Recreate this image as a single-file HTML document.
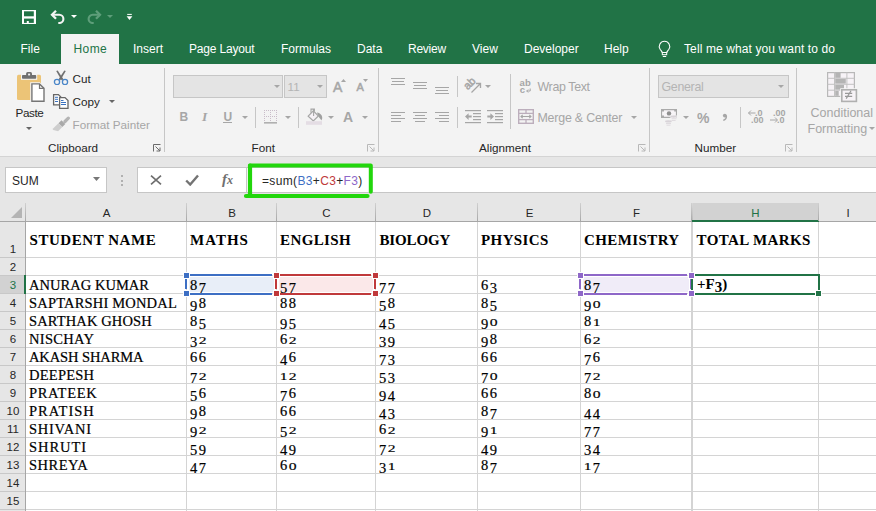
<!DOCTYPE html>
<html><head><meta charset="utf-8"><style>
html,body{margin:0;padding:0;width:876px;height:511px;overflow:hidden;background:#fff}
body{position:relative;font-family:"Liberation Sans",sans-serif}
.b{position:absolute;display:block}
.t{position:absolute;white-space:pre}
</style></head><body>
<div class="b" style="left:0px;top:0px;width:876px;height:64px;background:#217346"></div>
<div class="b" style="left:61px;top:34px;width:58px;height:30px;background:#f3f3f3"></div>
<svg class="b" style="left:22px;top:10px" width="14" height="14" viewBox="0 0 14 14"><rect x="0" y="0" width="14" height="14" fill="#fff"/><rect x="2" y="1.3" width="9.8" height="5" fill="#217346"/><rect x="2" y="8.6" width="9.8" height="4.3" fill="#217346"/><rect x="4.8" y="11" width="2" height="2" fill="#fff"/></svg>
<svg class="b" style="left:50px;top:9px" width="16" height="15" viewBox="0 0 16 15"><path d="M3 5.8h6.3a4.1 4.1 0 0 1 0 8.2h-1" fill="none" stroke="#f4f4f4" stroke-width="2.1"/><path d="M6 1.8l-4 4 4 4" fill="none" stroke="#f4f4f4" stroke-width="2.3"/></svg>
<svg class="b" style="left:71px;top:15px" width="6" height="3" viewBox="0 0 6 3"><path d="M0 0h6l-3 3z" fill="#fff"/></svg>
<svg class="b" style="left:86px;top:9px" width="16" height="15" viewBox="0 0 16 15"><path d="M13 5.8h-6.3a4.1 4.1 0 0 0 0 8.2h1" fill="none" stroke="#5e9e7a" stroke-width="2.1"/><path d="M10 1.8l4 4-4 4" fill="none" stroke="#5e9e7a" stroke-width="2.3"/></svg>
<svg class="b" style="left:107px;top:15px" width="6" height="3" viewBox="0 0 6 3"><path d="M0 0h6l-3 3z" fill="#5e9e7a"/></svg>
<svg class="b" style="left:126px;top:13px" width="7" height="8" viewBox="0 0 7 8"><rect x="1.2" y="0.9" width="4.6" height="1" fill="#fff"/><path d="M0.6 3.3h5.8l-2.9 3.6z" fill="#fff"/></svg>
<div class="t" style="left:20.5px;top:42.84px;font-size:12px;line-height:12px;color:#ffffff;font-family:'Liberation Sans', sans-serif;font-weight:400;letter-spacing:0px">File</div>
<div class="t" style="left:133px;top:42.84px;font-size:12px;line-height:12px;color:#ffffff;font-family:'Liberation Sans', sans-serif;font-weight:400;letter-spacing:0px">Insert</div>
<div class="t" style="left:189px;top:42.84px;font-size:12px;line-height:12px;color:#ffffff;font-family:'Liberation Sans', sans-serif;font-weight:400;letter-spacing:-0.18px">Page Layout</div>
<div class="t" style="left:281px;top:42.84px;font-size:12px;line-height:12px;color:#ffffff;font-family:'Liberation Sans', sans-serif;font-weight:400;letter-spacing:0px">Formulas</div>
<div class="t" style="left:357px;top:42.84px;font-size:12px;line-height:12px;color:#ffffff;font-family:'Liberation Sans', sans-serif;font-weight:400;letter-spacing:0px">Data</div>
<div class="t" style="left:408px;top:42.84px;font-size:12px;line-height:12px;color:#ffffff;font-family:'Liberation Sans', sans-serif;font-weight:400;letter-spacing:-0.25px">Review</div>
<div class="t" style="left:472px;top:42.84px;font-size:12px;line-height:12px;color:#ffffff;font-family:'Liberation Sans', sans-serif;font-weight:400;letter-spacing:0px">View</div>
<div class="t" style="left:524px;top:42.84px;font-size:12px;line-height:12px;color:#ffffff;font-family:'Liberation Sans', sans-serif;font-weight:400;letter-spacing:0px">Developer</div>
<div class="t" style="left:604px;top:42.84px;font-size:12px;line-height:12px;color:#ffffff;font-family:'Liberation Sans', sans-serif;font-weight:400;letter-spacing:0px">Help</div>
<div class="t" style="left:684px;top:42.84px;font-size:12px;line-height:12px;color:#ffffff;font-family:'Liberation Sans', sans-serif;font-weight:400;letter-spacing:0.11px">Tell me what you want to do</div>
<div class="t" style="left:73.5px;top:42.84px;font-size:12px;line-height:12px;color:#217346;font-family:'Liberation Sans', sans-serif;font-weight:400;letter-spacing:0.4px">Home</div>
<svg class="b" style="left:657px;top:40px" width="15" height="18" viewBox="0 0 15 18"><path d="M7.5 1.2a5.2 5.2 0 0 0-4.4 8c0.9 1.3 1.8 2.2 2.2 3.3h4.4c0.4-1.1 1.3-2 2.2-3.3a5.2 5.2 0 0 0-4.4-8z" fill="none" stroke="#fff" stroke-width="1.1"/><rect x="5.3" y="12.5" width="4.4" height="2.2" fill="none" stroke="#fff" stroke-width="1"/><path d="M5.8 16.5h3.4" stroke="#fff" stroke-width="1"/></svg>
<div class="b" style="left:0px;top:64px;width:876px;height:92px;background:#f3f3f3"></div>
<div class="b" style="left:0px;top:156px;width:876px;height:1px;background:#d4d4d4"></div>
<div class="b" style="left:164px;top:68px;width:1px;height:84px;background:#c6c6c6"></div>
<div class="b" style="left:378px;top:68px;width:1px;height:84px;background:#c6c6c6"></div>
<div class="b" style="left:649px;top:68px;width:1px;height:84px;background:#c6c6c6"></div>
<div class="b" style="left:796px;top:68px;width:1px;height:84px;background:#c6c6c6"></div>
<div class="t" style="left:48px;top:142.10px;font-size:11.7px;line-height:11.7px;color:#262626;font-family:'Liberation Sans', sans-serif;font-weight:400;">Clipboard</div>
<div class="t" style="left:251.5px;top:142.10px;font-size:11.7px;line-height:11.7px;color:#262626;font-family:'Liberation Sans', sans-serif;font-weight:400;">Font</div>
<div class="t" style="left:479px;top:142.10px;font-size:11.7px;line-height:11.7px;color:#262626;font-family:'Liberation Sans', sans-serif;font-weight:400;">Alignment</div>
<div class="t" style="left:694.5px;top:142.10px;font-size:11.7px;line-height:11.7px;color:#262626;font-family:'Liberation Sans', sans-serif;font-weight:400;">Number</div>
<svg class="b" style="left:153px;top:144px" width="8" height="8" viewBox="0 0 8 8"><path d="M0.5 7.5v-7h7" fill="none" stroke="#6b6b6b" stroke-width="1"/><path d="M2.5 2.5l4.5 4.5M7 3.5v3.5h-3.5" fill="none" stroke="#6b6b6b" stroke-width="1"/></svg>
<svg class="b" style="left:367px;top:144px" width="8" height="8" viewBox="0 0 8 8"><path d="M0.5 7.5v-7h7" fill="none" stroke="#b8b8b8" stroke-width="1"/><path d="M2.5 2.5l4.5 4.5M7 3.5v3.5h-3.5" fill="none" stroke="#b8b8b8" stroke-width="1"/></svg>
<svg class="b" style="left:638px;top:144px" width="8" height="8" viewBox="0 0 8 8"><path d="M0.5 7.5v-7h7" fill="none" stroke="#b8b8b8" stroke-width="1"/><path d="M2.5 2.5l4.5 4.5M7 3.5v3.5h-3.5" fill="none" stroke="#b8b8b8" stroke-width="1"/></svg>
<svg class="b" style="left:785px;top:144px" width="8" height="8" viewBox="0 0 8 8"><path d="M0.5 7.5v-7h7" fill="none" stroke="#b8b8b8" stroke-width="1"/><path d="M2.5 2.5l4.5 4.5M7 3.5v3.5h-3.5" fill="none" stroke="#b8b8b8" stroke-width="1"/></svg>
<svg class="b" style="left:15px;top:71px" width="32" height="33" viewBox="0 0 32 33"><rect x="2" y="3.8" width="24" height="25.2" rx="1.5" fill="#ecc477"/><rect x="6" y="3" width="16.2" height="5.8" fill="#f3f3f3"/><rect x="7" y="4" width="14.2" height="3.8" rx="0.8" fill="#6f6f6f"/><rect x="11.1" y="1.1" width="5.9" height="4" rx="1.5" fill="#6f6f6f"/><rect x="13.1" y="2.6" width="2" height="1.8" fill="#f3f3f3"/><path d="M15.2 11.2h9.6l5.9 5.9v14.7h-15.5z" fill="#f3f3f3"/><path d="M16.9 12.9h7.6l4.5 4.5v12.8h-12.1z" fill="#fff" stroke="#757575" stroke-width="1.4"/><path d="M24.5 12.9v4.5h4.5" fill="none" stroke="#757575" stroke-width="1.2"/></svg>
<div class="t" style="left:15.5px;top:107.10px;font-size:11.7px;line-height:11.7px;color:#262626;font-family:'Liberation Sans', sans-serif;font-weight:400;letter-spacing:-0.4px">Paste</div>
<svg class="b" style="left:26px;top:127px" width="6" height="3" viewBox="0 0 6 3"><path d="M0 0h6l-3 3z" fill="#666"/></svg>
<svg class="b" style="left:53px;top:70px" width="16" height="15" viewBox="0 0 16 15"><path d="M3.2 0.9L4.7 0.4L10.6 9.4L8.6 10.2z" fill="#707070"/><path d="M12.8 0.9L11.3 0.4L5.4 9.4L7.4 10.2z" fill="#707070"/><circle cx="4" cy="12" r="2.6" fill="none" stroke="#4a86c8" stroke-width="1.3"/><circle cx="12" cy="12" r="2.6" fill="none" stroke="#4a86c8" stroke-width="1.3"/></svg>
<div class="t" style="left:72.5px;top:73.10px;font-size:11.7px;line-height:11.7px;color:#262626;font-family:'Liberation Sans', sans-serif;font-weight:400;">Cut</div>
<svg class="b" style="left:52px;top:93px" width="18" height="16" viewBox="0 0 18 16"><path d="M1.6 1.6h4.8l2.4 2.4v7.8h-7.2z" fill="#fff" stroke="#666" stroke-width="1.3"/><path d="M3 4.3h3M3 6.3h3M3 8.5h3" stroke="#3a72c0" stroke-width="1"/><path d="M7.6 4.6h5.4l3 3v7.8h-8.4z" fill="#fff" stroke="#666" stroke-width="1.3"/><path d="M9 7.5h2.5M9 9.5h5M9 11.5h5" stroke="#3a72c0" stroke-width="1"/></svg>
<div class="t" style="left:72.5px;top:96.10px;font-size:11.7px;line-height:11.7px;color:#262626;font-family:'Liberation Sans', sans-serif;font-weight:400;">Copy</div>
<svg class="b" style="left:109px;top:100px" width="6" height="3" viewBox="0 0 6 3"><path d="M0 0h6l-3 3z" fill="#666"/></svg>
<svg class="b" style="left:52px;top:115px" width="18" height="17" viewBox="0 0 18 17"><path d="M16.3 3.2L13 6.5" stroke="#b4b4b4" stroke-width="3.2" stroke-linecap="round"/><path d="M9.5 5.2l3.8 3.8-3 3-3.8-3.8z" fill="#a9a9a9"/><path d="M6.5 8.2l3.8 3.8-4.2 4.3-4.8-1.2-0.8-1z" fill="#cecece"/></svg>
<div class="t" style="left:72.5px;top:119.10px;font-size:11.7px;line-height:11.7px;color:#a6a6a6;font-family:'Liberation Sans', sans-serif;font-weight:400;">Format Painter</div>
<div class="b" style="left:173px;top:75px;width:110px;height:23px;background:#e4e4e4;border:1px solid #c6c6c6;box-sizing:border-box"></div>
<div class="b" style="left:284px;top:75px;width:43px;height:23px;background:#e4e4e4;border:1px solid #c6c6c6;box-sizing:border-box"></div>
<svg class="b" style="left:274px;top:85px" width="6" height="3" viewBox="0 0 6 3"><path d="M0 0h6l-3 3z" fill="#a6a6a6"/></svg>
<svg class="b" style="left:317px;top:85px" width="6" height="3" viewBox="0 0 6 3"><path d="M0 0h6l-3 3z" fill="#a6a6a6"/></svg>
<div class="t" style="left:287.5px;top:81.10px;font-size:11.7px;line-height:11.7px;color:#b4b4b4;font-family:'Liberation Sans', sans-serif;font-weight:400;">11</div>
<div class="t" style="left:333px;top:79.85px;font-size:14px;line-height:14px;color:#a6a6a6;font-family:'Liberation Sans', sans-serif;font-weight:400;-webkit-text-stroke:0.5px #a6a6a6">A</div>
<svg class="b" style="left:341px;top:79px" width="5" height="3" viewBox="0 0 5 3"><path d="M0 3h5l-2.5-3z" fill="#a6a6a6"/></svg>
<div class="t" style="left:356.5px;top:82.39px;font-size:11px;line-height:11px;color:#a6a6a6;font-family:'Liberation Sans', sans-serif;font-weight:400;-webkit-text-stroke:0.5px #a6a6a6">A</div>
<svg class="b" style="left:363px;top:79px" width="5" height="3" viewBox="0 0 5 3"><path d="M0 0h5l-2.5 3z" fill="#a6a6a6"/></svg>
<div class="t" style="left:179.5px;top:110.84px;font-size:12px;line-height:12px;color:#a6a6a6;font-family:'Liberation Sans', sans-serif;font-weight:700;">B</div>
<div class="t" style="left:202px;top:109.99px;font-size:13.5px;line-height:13.5px;color:#a6a6a6;font-family:'Liberation Serif', serif;font-weight:700;"><i>I</i></div>
<div class="t" style="left:223.5px;top:110.84px;font-size:12px;line-height:12px;color:#a6a6a6;font-family:'Liberation Sans', sans-serif;font-weight:700;">U</div>
<div class="b" style="left:223px;top:122px;width:9px;height:1px;background:#a6a6a6"></div>
<svg class="b" style="left:242px;top:116px" width="6" height="3" viewBox="0 0 6 3"><path d="M0 0h6l-3 3z" fill="#a6a6a6"/></svg>
<svg class="b" style="left:285px;top:116px" width="6" height="3" viewBox="0 0 6 3"><path d="M0 0h6l-3 3z" fill="#a6a6a6"/></svg>
<svg class="b" style="left:328px;top:116px" width="6" height="3" viewBox="0 0 6 3"><path d="M0 0h6l-3 3z" fill="#a6a6a6"/></svg>
<svg class="b" style="left:362px;top:116px" width="6" height="3" viewBox="0 0 6 3"><path d="M0 0h6l-3 3z" fill="#a6a6a6"/></svg>
<div class="b" style="left:255px;top:107px;width:1px;height:21px;background:#c6c6c6"></div>
<div class="b" style="left:298px;top:107px;width:1px;height:21px;background:#c6c6c6"></div>
<svg class="b" style="left:264px;top:110px" width="13" height="14" viewBox="0 0 13 14"><rect x="0" y="0" width="1" height="1" fill="#c9bdc9"/><rect x="0" y="2" width="1" height="1" fill="#c9bdc9"/><rect x="0" y="4" width="1" height="1" fill="#c9bdc9"/><rect x="0" y="6" width="1" height="1" fill="#c9bdc9"/><rect x="0" y="8" width="1" height="1" fill="#c9bdc9"/><rect x="0" y="10" width="1" height="1" fill="#c9bdc9"/><rect x="2" y="0" width="1" height="1" fill="#c9bdc9"/><rect x="2" y="6" width="1" height="1" fill="#c9bdc9"/><rect x="4" y="0" width="1" height="1" fill="#c9bdc9"/><rect x="4" y="6" width="1" height="1" fill="#c9bdc9"/><rect x="6" y="0" width="1" height="1" fill="#c9bdc9"/><rect x="6" y="2" width="1" height="1" fill="#c9bdc9"/><rect x="6" y="4" width="1" height="1" fill="#c9bdc9"/><rect x="6" y="6" width="1" height="1" fill="#c9bdc9"/><rect x="6" y="8" width="1" height="1" fill="#c9bdc9"/><rect x="6" y="10" width="1" height="1" fill="#c9bdc9"/><rect x="8" y="0" width="1" height="1" fill="#c9bdc9"/><rect x="8" y="6" width="1" height="1" fill="#c9bdc9"/><rect x="10" y="0" width="1" height="1" fill="#c9bdc9"/><rect x="10" y="6" width="1" height="1" fill="#c9bdc9"/><rect x="12" y="0" width="1" height="1" fill="#c9bdc9"/><rect x="12" y="2" width="1" height="1" fill="#c9bdc9"/><rect x="12" y="4" width="1" height="1" fill="#c9bdc9"/><rect x="12" y="6" width="1" height="1" fill="#c9bdc9"/><rect x="12" y="8" width="1" height="1" fill="#c9bdc9"/><rect x="12" y="10" width="1" height="1" fill="#c9bdc9"/><rect x="0" y="12.2" width="13" height="1.3" fill="#a0a0a0"/></svg>
<svg class="b" style="left:306px;top:108px" width="17" height="17" viewBox="0 0 17 17"><path d="M11 4.6C14.6 5.2 16.6 8 16.2 10.6L15.4 12.6C14.6 11.2 13.6 10 12.2 8.2z" fill="#a0a0a0"/><path d="M2.2 8.2L7.3 2.8L12.4 8L7.3 12.9z" fill="#f6f1f6" stroke="#a6a6a6" stroke-width="1.2"/><path d="M5 4.8V1.1H8.4V3.5M7.6 1.6V8" fill="none" stroke="#a6a6a6" stroke-width="1.1"/><rect x="0" y="13.2" width="16" height="3.6" fill="#e4dde4"/></svg>
<div class="t" style="left:343px;top:109.65px;font-size:14px;line-height:14px;color:#a6a6a6;font-family:'Liberation Sans', sans-serif;font-weight:700;">A</div>
<svg class="b" style="left:391px;top:77px" width="14" height="18" viewBox="0 0 14 18"><rect x="0" y="1" width="14" height="1" fill="#a6a6a6"/><rect x="1" y="4" width="12" height="1" fill="#a6a6a6"/><rect x="0" y="7" width="14" height="1" fill="#a6a6a6"/></svg>
<svg class="b" style="left:413px;top:77px" width="14" height="18" viewBox="0 0 14 18"><rect x="0" y="5" width="14" height="1" fill="#a6a6a6"/><rect x="1" y="8" width="12" height="1" fill="#a6a6a6"/><rect x="0" y="11" width="14" height="1" fill="#a6a6a6"/></svg>
<svg class="b" style="left:435px;top:77px" width="14" height="18" viewBox="0 0 14 18"><rect x="0" y="10" width="14" height="1" fill="#a6a6a6"/><rect x="1" y="13" width="12" height="1" fill="#a6a6a6"/><rect x="0" y="16" width="14" height="1" fill="#a6a6a6"/></svg>
<div class="b" style="left:457px;top:76px;width:1px;height:21px;background:#c6c6c6"></div>
<svg class="b" style="left:460px;top:74px" width="24" height="24" viewBox="0 0 24 24"><text x="0" y="3.5" text-anchor="middle" transform="translate(9.5 9.5) rotate(-45)" font-family="Liberation Sans" font-size="11" fill="#a6a6a6" stroke="#a6a6a6" stroke-width="0.5">ab</text><path d="M11.5 18.5L20.5 9.5M16 9.5h4.5v4.5" fill="none" stroke="#a6a6a6" stroke-width="1.3"/></svg>
<svg class="b" style="left:485px;top:85px" width="6" height="3" viewBox="0 0 6 3"><path d="M0 0h6l-3 3z" fill="#a6a6a6"/></svg>
<svg class="b" style="left:391px;top:111px" width="14" height="12" viewBox="0 0 14 12"><rect x="0" y="1" width="14" height="1" fill="#a6a6a6"/><rect x="0" y="4" width="10" height="1" fill="#a6a6a6"/><rect x="0" y="7" width="14" height="1" fill="#a6a6a6"/><rect x="0" y="10" width="10" height="1" fill="#a6a6a6"/></svg>
<svg class="b" style="left:413px;top:111px" width="14" height="12" viewBox="0 0 14 12"><rect x="0" y="1" width="14" height="1" fill="#a6a6a6"/><rect x="2" y="4" width="10" height="1" fill="#a6a6a6"/><rect x="0" y="7" width="14" height="1" fill="#a6a6a6"/><rect x="2" y="10" width="10" height="1" fill="#a6a6a6"/></svg>
<svg class="b" style="left:435px;top:111px" width="14" height="12" viewBox="0 0 14 12"><rect x="0" y="1" width="14" height="1" fill="#a6a6a6"/><rect x="4" y="4" width="10" height="1" fill="#a6a6a6"/><rect x="0" y="7" width="14" height="1" fill="#a6a6a6"/><rect x="4" y="10" width="10" height="1" fill="#a6a6a6"/></svg>
<div class="b" style="left:457px;top:107px;width:1px;height:21px;background:#c6c6c6"></div>
<svg class="b" style="left:465px;top:109px" width="16" height="15" viewBox="0 0 16 15"><rect x="0" y="1" width="16" height="1.2" fill="#a6a6a6"/><rect x="8" y="4" width="8" height="1.2" fill="#a6a6a6"/><rect x="8" y="7" width="8" height="1.2" fill="#a6a6a6"/><rect x="8" y="10" width="8" height="1.2" fill="#a6a6a6"/><rect x="0" y="13" width="16" height="1.2" fill="#a6a6a6"/><path d="M0 7.6L3.6 4.3V6.6H6.7V8.6H3.6V10.9z" fill="#a6a6a6"/></svg>
<svg class="b" style="left:487px;top:109px" width="16" height="15" viewBox="0 0 16 15"><rect x="0" y="1" width="16" height="1.2" fill="#a6a6a6"/><rect x="8" y="4" width="8" height="1.2" fill="#a6a6a6"/><rect x="8" y="7" width="8" height="1.2" fill="#a6a6a6"/><rect x="8" y="10" width="8" height="1.2" fill="#a6a6a6"/><rect x="0" y="13" width="16" height="1.2" fill="#a6a6a6"/><path d="M7 7.6L3.4 4.3V6.6H0.3V8.6H3.4V10.9z" fill="#a6a6a6"/></svg>
<div class="b" style="left:510px;top:74px;width:1px;height:55px;background:#c6c6c6"></div>
<svg class="b" style="left:519px;top:78px" width="14" height="16" viewBox="0 0 14 16"><text x="0.6" y="7.8" font-family="Liberation Sans" font-weight="700" font-size="9.5" fill="#a6a6a6">ab</text><text x="0.8" y="14.6" font-family="Liberation Sans" font-weight="700" font-size="9.5" fill="#a6a6a6">c</text><path d="M11.2 10.5v2.5h-3.5M9.2 11.5l-1.5 1.5 1.5 1.5" fill="none" stroke="#a6a6a6" stroke-width="1"/></svg>
<div class="t" style="left:537.5px;top:80.50px;font-size:12.4px;line-height:12.4px;color:#a6a6a6;font-family:'Liberation Sans', sans-serif;font-weight:400;letter-spacing:-0.35px">Wrap Text</div>
<svg class="b" style="left:518px;top:109px" width="16" height="15" viewBox="0 0 16 15"><rect x="0.7" y="0.7" width="14.6" height="13.6" fill="none" stroke="#bcaebc" stroke-width="1.4"/><path d="M0.5 4.3h15M0.5 10.7h15M8 0.5v4M8 10.5v4" stroke="#bcaebc" stroke-width="1.3"/><path d="M3 7.5h10M4.7 5.8l-1.7 1.7 1.7 1.7M11.3 5.8l1.7 1.7-1.7 1.7" fill="none" stroke="#a6a6a6" stroke-width="1.1"/></svg>
<div class="t" style="left:537.5px;top:111.50px;font-size:12.4px;line-height:12.4px;color:#a6a6a6;font-family:'Liberation Sans', sans-serif;font-weight:400;letter-spacing:-0.2px">Merge &amp; Center</div>
<svg class="b" style="left:631px;top:116px" width="6" height="3" viewBox="0 0 6 3"><path d="M0 0h6l-3 3z" fill="#a6a6a6"/></svg>
<div class="b" style="left:658px;top:75px;width:131px;height:23px;background:#e4e4e4;border:1px solid #c6c6c6;box-sizing:border-box"></div>
<div class="t" style="left:661.5px;top:80.50px;font-size:12.4px;line-height:12.4px;color:#b4b4b4;font-family:'Liberation Sans', sans-serif;font-weight:400;letter-spacing:-0.3px">General</div>
<svg class="b" style="left:778px;top:85px" width="6" height="3" viewBox="0 0 6 3"><path d="M0 0h6l-3 3z" fill="#a6a6a6"/></svg>
<svg class="b" style="left:660px;top:108px" width="19" height="18" viewBox="0 0 19 18"><rect x="1" y="1" width="16" height="9" fill="#aaaaaa"/><path d="M4 2.3H14.2V3.6H15.9V7.5H14.2V8.8H4V7.5H2.1V3.6H4z" fill="#f7f4f7"/><circle cx="9" cy="5.4" r="2.2" fill="#909090"/><ellipse cx="13.6" cy="8.6" rx="4" ry="1.6" fill="#f3f3f3"/><ellipse cx="13.6" cy="8.6" rx="3.3" ry="1.1" fill="#d8d3d8"/><rect x="11.6" y="10.3" width="5" height="0.9" fill="#ddd8dd"/><rect x="11.6" y="12" width="4" height="0.9" fill="#ddd8dd"/><ellipse cx="8.4" cy="13.4" rx="3.3" ry="1.1" fill="#d8d3d8"/><rect x="6" y="15.1" width="5" height="0.9" fill="#ddd8dd"/><rect x="6.5" y="16.7" width="4" height="0.9" fill="#ddd8dd"/></svg>
<svg class="b" style="left:683px;top:116px" width="6" height="3" viewBox="0 0 6 3"><path d="M0 0h6l-3 3z" fill="#a6a6a6"/></svg>
<div class="t" style="left:697px;top:111.15px;font-size:14px;line-height:14px;color:#a6a6a6;font-family:'Liberation Sans', sans-serif;font-weight:700;transform:scaleY(1.1);transform-origin:0 100%">%</div>
<svg class="b" style="left:721px;top:113px" width="7" height="8" viewBox="0 0 7 8"><circle cx="3.8" cy="2.6" r="1.9" fill="#a6a6a6"/><path d="M5.2 2.4c0.6 2.4-0.6 4.2-2.9 5" fill="none" stroke="#a6a6a6" stroke-width="1.4"/></svg>
<div class="b" style="left:740px;top:107px;width:1px;height:21px;background:#c6c6c6"></div>
<div class="t" style="left:755px;top:109.38px;font-size:9px;line-height:9px;color:#a6a6a6;font-family:'Liberation Sans', sans-serif;font-weight:700;">.0</div>
<div class="t" style="left:751px;top:116.38px;font-size:9px;line-height:9px;color:#a6a6a6;font-family:'Liberation Sans', sans-serif;font-weight:700;">.00</div>
<svg class="b" style="left:748px;top:110px" width="8" height="6" viewBox="0 0 8 6"><path d="M0.5 3h7M3 0.5l-2.5 2.5 2.5 2.5" fill="none" stroke="#a6a6a6" stroke-width="1"/></svg>
<div class="t" style="left:773px;top:109.38px;font-size:9px;line-height:9px;color:#a6a6a6;font-family:'Liberation Sans', sans-serif;font-weight:700;">.00</div>
<div class="t" style="left:777px;top:116.38px;font-size:9px;line-height:9px;color:#a6a6a6;font-family:'Liberation Sans', sans-serif;font-weight:700;">.0</div>
<svg class="b" style="left:770px;top:117px" width="8" height="6" viewBox="0 0 8 6"><path d="M0 3h7M5 0.5l2.5 2.5-2.5 2.5" fill="none" stroke="#a6a6a6" stroke-width="1"/></svg>
<svg class="b" style="left:827px;top:72px" width="32" height="31" viewBox="0 0 32 31"><rect x="0.6" y="0.6" width="26.8" height="23.8" fill="#f7f3f7" stroke="#b8b8b8" stroke-width="1.2"/><path d="M0.5 6.3h27M0.5 12.3h27M0.5 18.2h27M7.5 0.5v24M19.9 0.5v24" stroke="#c2c2c2" stroke-width="1"/><g fill="#b4b4b4"><rect x="8.2" y="1" width="5.4" height="4.8"/><rect x="8.2" y="7" width="10.6" height="4.6"/><rect x="8.2" y="13" width="8.8" height="4.6"/><rect x="8.2" y="18.9" width="3.5" height="4.9"/></g><rect x="13.2" y="16.2" width="18" height="14.6" fill="#f3f3f3"/><rect x="14.8" y="17.8" width="14.6" height="11.6" fill="#f7f3f7" stroke="#b0b0b0" stroke-width="1.6"/><path d="M18 21.3h7.2M18 24.3h7.2M24 18.8L19.2 26.6" stroke="#999" stroke-width="1.2"/></svg>
<div class="t" style="left:810.5px;top:107.42px;font-size:12.5px;line-height:12.5px;color:#a6a6a6;font-family:'Liberation Sans', sans-serif;font-weight:400;letter-spacing:0px">Conditional</div>
<div class="t" style="left:807.5px;top:123.42px;font-size:12.5px;line-height:12.5px;color:#a6a6a6;font-family:'Liberation Sans', sans-serif;font-weight:400;letter-spacing:0px">Formatting</div>
<svg class="b" style="left:869px;top:127px" width="6" height="3" viewBox="0 0 6 3"><path d="M0 0h6l-3 3z" fill="#a6a6a6"/></svg>
<div class="b" style="left:0px;top:157px;width:876px;height:46px;background:#e6e6e6"></div>
<div class="b" style="left:5px;top:167px;width:102px;height:26px;background:#fff;border:1px solid #c6c6c6;box-sizing:border-box"></div>
<div class="t" style="left:12px;top:174.84px;font-size:12px;line-height:12px;color:#262626;font-family:'Liberation Sans', sans-serif;font-weight:400;">SUM</div>
<svg class="b" style="left:93px;top:177px" width="7" height="4" viewBox="0 0 7 4"><path d="M0 0h7l-3.5 4z" fill="#777"/></svg>
<div class="b" style="left:121px;top:175px;width:2px;height:2px;background:#b0b0b0"></div>
<div class="b" style="left:121px;top:179.5px;width:2px;height:2px;background:#b0b0b0"></div>
<div class="b" style="left:121px;top:184px;width:2px;height:2px;background:#b0b0b0"></div>
<div class="b" style="left:137px;top:167px;width:741px;height:26px;background:#fff;border:1px solid #c6c6c6;box-sizing:border-box"></div>
<div class="b" style="left:246px;top:167px;width:1px;height:26px;background:#c6c6c6"></div>
<svg class="b" style="left:150px;top:175px" width="12" height="10" viewBox="0 0 12 10"><path d="M1 0.7l10 8.6M11 0.7l-10 8.6" stroke="#6e6e6e" stroke-width="1.7"/></svg>
<svg class="b" style="left:185px;top:174px" width="14" height="12" viewBox="0 0 14 12"><path d="M1.2 6.5l4 4 7.8-9" fill="none" stroke="#737373" stroke-width="2.4"/></svg>
<div class="t" style="left:222px;top:172.44px;font-size:15px;line-height:15px;color:#707070;font-family:'Liberation Serif', serif;font-weight:700;"><i>f</i><span style="font-size:12px"><i>x</i></span></div>
<div class="t" style="left:262px;top:174.84px;font-size:12px;line-height:12px;color:#262626;font-family:'Liberation Sans', sans-serif;font-weight:400;letter-spacing:0.35px">=sum(<span style="color:#3d6fc4">B3</span>+<span style="color:#c0393b">C3</span>+<span style="color:#8e67c8">F3</span>)</div>
<svg class="b" style="left:243px;top:162px" width="133" height="38" viewBox="0 0 133 38"><path d="M7 3.6H127.8V29.8" fill="none" stroke="#22d60c" stroke-width="4" stroke-linecap="round" stroke-linejoin="round"/><path d="M7 3.6V33.9M3 34H124.5" fill="none" stroke="#22d60c" stroke-width="4.2" stroke-linecap="round"/></svg>
<div class="b" style="left:0px;top:203px;width:876px;height:18px;background:#e6e6e6"></div>
<div class="b" style="left:692px;top:203px;width:126px;height:17px;background:#d2d2d2"></div>
<div class="b" style="left:0px;top:221px;width:876px;height:1px;background:#a6a6a6"></div>
<div class="b" style="left:692px;top:220px;width:127px;height:2px;background:#217346"></div>
<svg class="b" style="left:11px;top:207px" width="12" height="12" viewBox="0 0 12 12"><path d="M11 0V11H0z" fill="#b4b4b4"/></svg>
<div class="t" style="left:26px;width:161px;top:208.27px;font-size:11.5px;line-height:11.5px;text-align:center;color:#262626;font-family:'Liberation Sans', sans-serif">A</div>
<div class="t" style="left:187px;width:90px;top:208.27px;font-size:11.5px;line-height:11.5px;text-align:center;color:#262626;font-family:'Liberation Sans', sans-serif">B</div>
<div class="t" style="left:277px;width:99px;top:208.27px;font-size:11.5px;line-height:11.5px;text-align:center;color:#262626;font-family:'Liberation Sans', sans-serif">C</div>
<div class="t" style="left:376px;width:102px;top:208.27px;font-size:11.5px;line-height:11.5px;text-align:center;color:#262626;font-family:'Liberation Sans', sans-serif">D</div>
<div class="t" style="left:478px;width:103px;top:208.27px;font-size:11.5px;line-height:11.5px;text-align:center;color:#262626;font-family:'Liberation Sans', sans-serif">E</div>
<div class="t" style="left:581px;width:111px;top:208.27px;font-size:11.5px;line-height:11.5px;text-align:center;color:#262626;font-family:'Liberation Sans', sans-serif">F</div>
<div class="t" style="left:692px;width:127px;top:208.27px;font-size:11.5px;line-height:11.5px;text-align:center;color:#217346;font-family:'Liberation Sans', sans-serif">H</div>
<div class="t" style="left:819px;width:58px;top:208.27px;font-size:11.5px;line-height:11.5px;text-align:center;color:#262626;font-family:'Liberation Sans', sans-serif">I</div>
<div class="b" style="left:25px;top:203px;width:1px;height:18px;background:linear-gradient(#d0d0d0,#a8a8a8)"></div>
<div class="b" style="left:186px;top:203px;width:1px;height:18px;background:linear-gradient(#d0d0d0,#a8a8a8)"></div>
<div class="b" style="left:276px;top:203px;width:1px;height:18px;background:linear-gradient(#d0d0d0,#a8a8a8)"></div>
<div class="b" style="left:375px;top:203px;width:1px;height:18px;background:linear-gradient(#d0d0d0,#a8a8a8)"></div>
<div class="b" style="left:477px;top:203px;width:1px;height:18px;background:linear-gradient(#d0d0d0,#a8a8a8)"></div>
<div class="b" style="left:580px;top:203px;width:1px;height:18px;background:linear-gradient(#d0d0d0,#a8a8a8)"></div>
<div class="b" style="left:691px;top:203px;width:1px;height:18px;background:linear-gradient(#d0d0d0,#a8a8a8)"></div>
<div class="b" style="left:818px;top:203px;width:1px;height:18px;background:linear-gradient(#d0d0d0,#a8a8a8)"></div>
<div class="b" style="left:692px;top:203px;width:1px;height:17px;background:linear-gradient(#d8d8d8,#bcbcbc)"></div>
<div class="b" style="left:0px;top:222px;width:25px;height:289px;background:#e6e6e6"></div>
<div class="b" style="left:0px;top:275px;width:25px;height:18px;background:#d2d2d2"></div>
<div class="b" style="left:25px;top:222px;width:851px;height:289px;background:#fff"></div>
<div class="b" style="left:0px;top:257px;width:25px;height:1px;background:#c8c8c8"></div>
<div class="b" style="left:25px;top:257px;width:851px;height:1px;background:#d4d4d4"></div>
<div class="b" style="left:0px;top:275px;width:25px;height:1px;background:#c8c8c8"></div>
<div class="b" style="left:25px;top:275px;width:851px;height:1px;background:#d4d4d4"></div>
<div class="b" style="left:0px;top:293px;width:25px;height:1px;background:#c8c8c8"></div>
<div class="b" style="left:25px;top:293px;width:851px;height:1px;background:#d4d4d4"></div>
<div class="b" style="left:0px;top:311px;width:25px;height:1px;background:#c8c8c8"></div>
<div class="b" style="left:25px;top:311px;width:851px;height:1px;background:#d4d4d4"></div>
<div class="b" style="left:0px;top:329px;width:25px;height:1px;background:#c8c8c8"></div>
<div class="b" style="left:25px;top:329px;width:851px;height:1px;background:#d4d4d4"></div>
<div class="b" style="left:0px;top:347px;width:25px;height:1px;background:#c8c8c8"></div>
<div class="b" style="left:25px;top:347px;width:851px;height:1px;background:#d4d4d4"></div>
<div class="b" style="left:0px;top:365px;width:25px;height:1px;background:#c8c8c8"></div>
<div class="b" style="left:25px;top:365px;width:851px;height:1px;background:#d4d4d4"></div>
<div class="b" style="left:0px;top:383px;width:25px;height:1px;background:#c8c8c8"></div>
<div class="b" style="left:25px;top:383px;width:851px;height:1px;background:#d4d4d4"></div>
<div class="b" style="left:0px;top:401px;width:25px;height:1px;background:#c8c8c8"></div>
<div class="b" style="left:25px;top:401px;width:851px;height:1px;background:#d4d4d4"></div>
<div class="b" style="left:0px;top:419px;width:25px;height:1px;background:#c8c8c8"></div>
<div class="b" style="left:25px;top:419px;width:851px;height:1px;background:#d4d4d4"></div>
<div class="b" style="left:0px;top:437px;width:25px;height:1px;background:#c8c8c8"></div>
<div class="b" style="left:25px;top:437px;width:851px;height:1px;background:#d4d4d4"></div>
<div class="b" style="left:0px;top:455px;width:25px;height:1px;background:#c8c8c8"></div>
<div class="b" style="left:25px;top:455px;width:851px;height:1px;background:#d4d4d4"></div>
<div class="b" style="left:0px;top:473px;width:25px;height:1px;background:#c8c8c8"></div>
<div class="b" style="left:25px;top:473px;width:851px;height:1px;background:#d4d4d4"></div>
<div class="b" style="left:0px;top:491px;width:25px;height:1px;background:#c8c8c8"></div>
<div class="b" style="left:25px;top:491px;width:851px;height:1px;background:#d4d4d4"></div>
<div class="b" style="left:0px;top:509px;width:25px;height:1px;background:#c8c8c8"></div>
<div class="b" style="left:25px;top:509px;width:851px;height:1px;background:#d4d4d4"></div>
<div class="b" style="left:186px;top:222px;width:1px;height:289px;background:#d4d4d4"></div>
<div class="b" style="left:276px;top:222px;width:1px;height:289px;background:#d4d4d4"></div>
<div class="b" style="left:375px;top:222px;width:1px;height:289px;background:#d4d4d4"></div>
<div class="b" style="left:477px;top:222px;width:1px;height:289px;background:#d4d4d4"></div>
<div class="b" style="left:580px;top:222px;width:1px;height:289px;background:#d4d4d4"></div>
<div class="b" style="left:691px;top:222px;width:1px;height:289px;background:#d4d4d4"></div>
<div class="b" style="left:818px;top:222px;width:1px;height:289px;background:#d4d4d4"></div>
<div class="b" style="left:692px;top:222px;width:1px;height:289px;background:#d4d4d4"></div>
<div class="b" style="left:25px;top:222px;width:1px;height:289px;background:#a6a6a6"></div>
<div class="b" style="left:24px;top:275px;width:2px;height:19px;background:#217346"></div>
<div class="t" style="left:0.5px;width:25px;top:243.77px;font-size:11.5px;line-height:11.5px;text-align:center;color:#262626;font-family:'Liberation Sans', sans-serif">1</div>
<div class="t" style="left:0.5px;width:25px;top:261.77px;font-size:11.5px;line-height:11.5px;text-align:center;color:#262626;font-family:'Liberation Sans', sans-serif">2</div>
<div class="t" style="left:0.5px;width:25px;top:279.77px;font-size:11.5px;line-height:11.5px;text-align:center;color:#217346;font-family:'Liberation Sans', sans-serif">3</div>
<div class="t" style="left:0.5px;width:25px;top:297.77px;font-size:11.5px;line-height:11.5px;text-align:center;color:#262626;font-family:'Liberation Sans', sans-serif">4</div>
<div class="t" style="left:0.5px;width:25px;top:315.77px;font-size:11.5px;line-height:11.5px;text-align:center;color:#262626;font-family:'Liberation Sans', sans-serif">5</div>
<div class="t" style="left:0.5px;width:25px;top:333.77px;font-size:11.5px;line-height:11.5px;text-align:center;color:#262626;font-family:'Liberation Sans', sans-serif">6</div>
<div class="t" style="left:0.5px;width:25px;top:351.77px;font-size:11.5px;line-height:11.5px;text-align:center;color:#262626;font-family:'Liberation Sans', sans-serif">7</div>
<div class="t" style="left:0.5px;width:25px;top:369.77px;font-size:11.5px;line-height:11.5px;text-align:center;color:#262626;font-family:'Liberation Sans', sans-serif">8</div>
<div class="t" style="left:0.5px;width:25px;top:387.77px;font-size:11.5px;line-height:11.5px;text-align:center;color:#262626;font-family:'Liberation Sans', sans-serif">9</div>
<div class="t" style="left:0.5px;width:25px;top:405.77px;font-size:11.5px;line-height:11.5px;text-align:center;color:#262626;font-family:'Liberation Sans', sans-serif">10</div>
<div class="t" style="left:0.5px;width:25px;top:423.77px;font-size:11.5px;line-height:11.5px;text-align:center;color:#262626;font-family:'Liberation Sans', sans-serif">11</div>
<div class="t" style="left:0.5px;width:25px;top:441.77px;font-size:11.5px;line-height:11.5px;text-align:center;color:#262626;font-family:'Liberation Sans', sans-serif">12</div>
<div class="t" style="left:0.5px;width:25px;top:459.77px;font-size:11.5px;line-height:11.5px;text-align:center;color:#262626;font-family:'Liberation Sans', sans-serif">13</div>
<div class="t" style="left:0.5px;width:25px;top:477.77px;font-size:11.5px;line-height:11.5px;text-align:center;color:#262626;font-family:'Liberation Sans', sans-serif">14</div>
<div class="t" style="left:0.5px;width:25px;top:495.77px;font-size:11.5px;line-height:11.5px;text-align:center;color:#262626;font-family:'Liberation Sans', sans-serif">15</div>
<div class="b" style="left:189px;top:277px;width:85px;height:15px;background:#e8eef8"></div>
<div class="b" style="left:190px;top:274px;width:82px;height:2px;background:#3d6fc4"></div>
<div class="b" style="left:190px;top:293px;width:82px;height:2px;background:#3d6fc4"></div>
<div class="b" style="left:185px;top:279px;width:2px;height:10px;background:#3d6fc4"></div>
<div class="b" style="left:275px;top:279px;width:2px;height:10px;background:#3d6fc4"></div>
<div class="b" style="left:279px;top:277px;width:94px;height:15px;background:#fbe8e9"></div>
<div class="b" style="left:280px;top:274px;width:91px;height:2px;background:#c0393b"></div>
<div class="b" style="left:280px;top:293px;width:91px;height:2px;background:#c0393b"></div>
<div class="b" style="left:275px;top:279px;width:2px;height:10px;background:#c0393b"></div>
<div class="b" style="left:374px;top:279px;width:2px;height:10px;background:#c0393b"></div>
<div class="b" style="left:583px;top:277px;width:106px;height:15px;background:#f0ecf8"></div>
<div class="b" style="left:584px;top:274px;width:103px;height:2px;background:#8e67c8"></div>
<div class="b" style="left:584px;top:293px;width:103px;height:2px;background:#8e67c8"></div>
<div class="b" style="left:579px;top:279px;width:2px;height:10px;background:#8e67c8"></div>
<div class="b" style="left:690px;top:279px;width:2px;height:10px;background:#8e67c8"></div>
<div class="b" style="left:693px;top:274px;width:126px;height:2px;background:#217346"></div>
<div class="b" style="left:693px;top:293px;width:123px;height:2px;background:#217346"></div>
<div class="b" style="left:691px;top:279px;width:2px;height:11px;background:#217346"></div>
<div class="b" style="left:818px;top:274px;width:2px;height:16px;background:#217346"></div>
<div class="b" style="left:815px;top:290px;width:7px;height:7px;background:#fff"></div>
<div class="b" style="left:816px;top:291px;width:5px;height:5px;background:#217346"></div>
<div class="b" style="left:183px;top:272px;width:7px;height:7px;background:#fff"></div>
<div class="b" style="left:184px;top:273px;width:5px;height:5px;background:#3d6fc4"></div>
<div class="b" style="left:183px;top:290px;width:7px;height:7px;background:#fff"></div>
<div class="b" style="left:184px;top:291px;width:5px;height:5px;background:#3d6fc4"></div>
<div class="b" style="left:273px;top:272px;width:7px;height:7px;background:#fff"></div>
<div class="b" style="left:274px;top:273px;width:5px;height:5px;background:#3d6fc4"></div>
<div class="b" style="left:273px;top:290px;width:7px;height:7px;background:#fff"></div>
<div class="b" style="left:274px;top:291px;width:5px;height:5px;background:#3d6fc4"></div>
<div class="b" style="left:273px;top:272px;width:7px;height:7px;background:#fff"></div>
<div class="b" style="left:274px;top:273px;width:5px;height:5px;background:#c0393b"></div>
<div class="b" style="left:273px;top:290px;width:7px;height:7px;background:#fff"></div>
<div class="b" style="left:274px;top:291px;width:5px;height:5px;background:#c0393b"></div>
<div class="b" style="left:372px;top:272px;width:7px;height:7px;background:#fff"></div>
<div class="b" style="left:373px;top:273px;width:5px;height:5px;background:#c0393b"></div>
<div class="b" style="left:372px;top:290px;width:7px;height:7px;background:#fff"></div>
<div class="b" style="left:373px;top:291px;width:5px;height:5px;background:#c0393b"></div>
<div class="b" style="left:577px;top:272px;width:7px;height:7px;background:#fff"></div>
<div class="b" style="left:578px;top:273px;width:5px;height:5px;background:#8e67c8"></div>
<div class="b" style="left:577px;top:290px;width:7px;height:7px;background:#fff"></div>
<div class="b" style="left:578px;top:291px;width:5px;height:5px;background:#8e67c8"></div>
<div class="b" style="left:688px;top:272px;width:7px;height:7px;background:#fff"></div>
<div class="b" style="left:689px;top:273px;width:5px;height:5px;background:#8e67c8"></div>
<div class="b" style="left:688px;top:290px;width:7px;height:7px;background:#fff"></div>
<div class="b" style="left:689px;top:291px;width:5px;height:5px;background:#8e67c8"></div>
<div class="t" style="left:29.5px;top:232.94px;font-size:15px;line-height:15px;color:#000;font-family:'Liberation Serif', serif;font-weight:700;letter-spacing:0.55px">STUDENT NAME</div>
<div class="t" style="left:190px;top:232.94px;font-size:15px;line-height:15px;color:#000;font-family:'Liberation Serif', serif;font-weight:700;letter-spacing:1.0px">MATHS</div>
<div class="t" style="left:280px;top:232.94px;font-size:15px;line-height:15px;color:#000;font-family:'Liberation Serif', serif;font-weight:700;letter-spacing:0.4px">ENGLISH</div>
<div class="t" style="left:379.5px;top:232.94px;font-size:15px;line-height:15px;color:#000;font-family:'Liberation Serif', serif;font-weight:700;letter-spacing:-0.15px">BIOLOGY</div>
<div class="t" style="left:481px;top:232.94px;font-size:15px;line-height:15px;color:#000;font-family:'Liberation Serif', serif;font-weight:700;letter-spacing:0.4px">PHYSICS</div>
<div class="t" style="left:584px;top:232.94px;font-size:15px;line-height:15px;color:#000;font-family:'Liberation Serif', serif;font-weight:700;letter-spacing:0.4px">CHEMISTRY</div>
<div class="t" style="left:696.5px;top:232.94px;font-size:15px;line-height:15px;color:#000;font-family:'Liberation Serif', serif;font-weight:700;letter-spacing:0.4px">TOTAL MARKS</div>
<div class="t" style="left:29px;top:277.86px;font-size:14.5px;line-height:14.5px;color:#000;font-family:'Liberation Serif', serif;font-weight:400;-webkit-text-stroke:0.2px #000;letter-spacing:0.036px">ANURAG KUMAR</div>
<div class="t" style="left:190px;top:277.86px;font-size:14.5px;line-height:14.5px;color:#000;font-family:'Liberation Serif', serif;font-weight:400;letter-spacing:1.4px;-webkit-text-stroke:0.2px #000">8<span style="display:inline-block;transform:translateY(3px)">7</span></div>
<div class="t" style="left:280px;top:277.86px;font-size:14.5px;line-height:14.5px;color:#000;font-family:'Liberation Serif', serif;font-weight:400;letter-spacing:1.4px;-webkit-text-stroke:0.2px #000"><span style="display:inline-block;transform:translateY(3px)">5</span><span style="display:inline-block;transform:translateY(3px)">7</span></div>
<div class="t" style="left:379px;top:277.86px;font-size:14.5px;line-height:14.5px;color:#000;font-family:'Liberation Serif', serif;font-weight:400;letter-spacing:1.4px;-webkit-text-stroke:0.2px #000"><span style="display:inline-block;transform:translateY(3px)">7</span><span style="display:inline-block;transform:translateY(3px)">7</span></div>
<div class="t" style="left:481px;top:277.86px;font-size:14.5px;line-height:14.5px;color:#000;font-family:'Liberation Serif', serif;font-weight:400;letter-spacing:1.4px;-webkit-text-stroke:0.2px #000">6<span style="display:inline-block;transform:translateY(3px)">3</span></div>
<div class="t" style="left:584px;top:277.86px;font-size:14.5px;line-height:14.5px;color:#000;font-family:'Liberation Serif', serif;font-weight:400;letter-spacing:1.4px;-webkit-text-stroke:0.2px #000">8<span style="display:inline-block;transform:translateY(3px)">7</span></div>
<div class="t" style="left:29px;top:295.86px;font-size:14.5px;line-height:14.5px;color:#000;font-family:'Liberation Serif', serif;font-weight:400;-webkit-text-stroke:0.2px #000;letter-spacing:0.18px">SAPTARSHI MONDAL</div>
<div class="t" style="left:190px;top:295.86px;font-size:14.5px;line-height:14.5px;color:#000;font-family:'Liberation Serif', serif;font-weight:400;letter-spacing:1.4px;-webkit-text-stroke:0.2px #000"><span style="display:inline-block;transform:translateY(3px)">9</span>8</div>
<div class="t" style="left:280px;top:295.86px;font-size:14.5px;line-height:14.5px;color:#000;font-family:'Liberation Serif', serif;font-weight:400;letter-spacing:1.4px;-webkit-text-stroke:0.2px #000">88</div>
<div class="t" style="left:379px;top:295.86px;font-size:14.5px;line-height:14.5px;color:#000;font-family:'Liberation Serif', serif;font-weight:400;letter-spacing:1.4px;-webkit-text-stroke:0.2px #000"><span style="display:inline-block;transform:translateY(3px)">5</span>8</div>
<div class="t" style="left:481px;top:295.86px;font-size:14.5px;line-height:14.5px;color:#000;font-family:'Liberation Serif', serif;font-weight:400;letter-spacing:1.4px;-webkit-text-stroke:0.2px #000">8<span style="display:inline-block;transform:translateY(3px)">5</span></div>
<div class="t" style="left:584px;top:295.86px;font-size:14.5px;line-height:14.5px;color:#000;font-family:'Liberation Serif', serif;font-weight:400;letter-spacing:1.4px;-webkit-text-stroke:0.2px #000"><span style="display:inline-block;transform:translateY(3px)">9</span><span style="display:inline-block;transform:scale(1.08,0.66);transform-origin:50% 12.14px">0</span></div>
<div class="t" style="left:29px;top:313.86px;font-size:14.5px;line-height:14.5px;color:#000;font-family:'Liberation Serif', serif;font-weight:400;-webkit-text-stroke:0.2px #000;letter-spacing:0.125px">SARTHAK GHOSH</div>
<div class="t" style="left:190px;top:313.86px;font-size:14.5px;line-height:14.5px;color:#000;font-family:'Liberation Serif', serif;font-weight:400;letter-spacing:1.4px;-webkit-text-stroke:0.2px #000">8<span style="display:inline-block;transform:translateY(3px)">5</span></div>
<div class="t" style="left:280px;top:313.86px;font-size:14.5px;line-height:14.5px;color:#000;font-family:'Liberation Serif', serif;font-weight:400;letter-spacing:1.4px;-webkit-text-stroke:0.2px #000"><span style="display:inline-block;transform:translateY(3px)">9</span><span style="display:inline-block;transform:translateY(3px)">5</span></div>
<div class="t" style="left:379px;top:313.86px;font-size:14.5px;line-height:14.5px;color:#000;font-family:'Liberation Serif', serif;font-weight:400;letter-spacing:1.4px;-webkit-text-stroke:0.2px #000"><span style="display:inline-block;transform:translateY(3px)">4</span><span style="display:inline-block;transform:translateY(3px)">5</span></div>
<div class="t" style="left:481px;top:313.86px;font-size:14.5px;line-height:14.5px;color:#000;font-family:'Liberation Serif', serif;font-weight:400;letter-spacing:1.4px;-webkit-text-stroke:0.2px #000"><span style="display:inline-block;transform:translateY(3px)">9</span><span style="display:inline-block;transform:scale(1.08,0.66);transform-origin:50% 12.14px">0</span></div>
<div class="t" style="left:584px;top:313.86px;font-size:14.5px;line-height:14.5px;color:#000;font-family:'Liberation Serif', serif;font-weight:400;letter-spacing:1.4px;-webkit-text-stroke:0.2px #000">8<span style="display:inline-block;transform:scale(1.08,0.66);transform-origin:50% 12.14px">1</span></div>
<div class="t" style="left:29px;top:331.86px;font-size:14.5px;line-height:14.5px;color:#000;font-family:'Liberation Serif', serif;font-weight:400;-webkit-text-stroke:0.2px #000;letter-spacing:0.317px">NISCHAY</div>
<div class="t" style="left:190px;top:331.86px;font-size:14.5px;line-height:14.5px;color:#000;font-family:'Liberation Serif', serif;font-weight:400;letter-spacing:1.4px;-webkit-text-stroke:0.2px #000"><span style="display:inline-block;transform:translateY(3px)">3</span><span style="display:inline-block;transform:scale(1.08,0.66);transform-origin:50% 12.14px">2</span></div>
<div class="t" style="left:280px;top:331.86px;font-size:14.5px;line-height:14.5px;color:#000;font-family:'Liberation Serif', serif;font-weight:400;letter-spacing:1.4px;-webkit-text-stroke:0.2px #000">6<span style="display:inline-block;transform:scale(1.08,0.66);transform-origin:50% 12.14px">2</span></div>
<div class="t" style="left:379px;top:331.86px;font-size:14.5px;line-height:14.5px;color:#000;font-family:'Liberation Serif', serif;font-weight:400;letter-spacing:1.4px;-webkit-text-stroke:0.2px #000"><span style="display:inline-block;transform:translateY(3px)">3</span><span style="display:inline-block;transform:translateY(3px)">9</span></div>
<div class="t" style="left:481px;top:331.86px;font-size:14.5px;line-height:14.5px;color:#000;font-family:'Liberation Serif', serif;font-weight:400;letter-spacing:1.4px;-webkit-text-stroke:0.2px #000"><span style="display:inline-block;transform:translateY(3px)">9</span>8</div>
<div class="t" style="left:584px;top:331.86px;font-size:14.5px;line-height:14.5px;color:#000;font-family:'Liberation Serif', serif;font-weight:400;letter-spacing:1.4px;-webkit-text-stroke:0.2px #000">6<span style="display:inline-block;transform:scale(1.08,0.66);transform-origin:50% 12.14px">2</span></div>
<div class="t" style="left:29px;top:349.86px;font-size:14.5px;line-height:14.5px;color:#000;font-family:'Liberation Serif', serif;font-weight:400;-webkit-text-stroke:0.2px #000;letter-spacing:-0.1px">AKASH SHARMA</div>
<div class="t" style="left:190px;top:349.86px;font-size:14.5px;line-height:14.5px;color:#000;font-family:'Liberation Serif', serif;font-weight:400;letter-spacing:1.4px;-webkit-text-stroke:0.2px #000">66</div>
<div class="t" style="left:280px;top:349.86px;font-size:14.5px;line-height:14.5px;color:#000;font-family:'Liberation Serif', serif;font-weight:400;letter-spacing:1.4px;-webkit-text-stroke:0.2px #000"><span style="display:inline-block;transform:translateY(3px)">4</span>6</div>
<div class="t" style="left:379px;top:349.86px;font-size:14.5px;line-height:14.5px;color:#000;font-family:'Liberation Serif', serif;font-weight:400;letter-spacing:1.4px;-webkit-text-stroke:0.2px #000"><span style="display:inline-block;transform:translateY(3px)">7</span><span style="display:inline-block;transform:translateY(3px)">3</span></div>
<div class="t" style="left:481px;top:349.86px;font-size:14.5px;line-height:14.5px;color:#000;font-family:'Liberation Serif', serif;font-weight:400;letter-spacing:1.4px;-webkit-text-stroke:0.2px #000">66</div>
<div class="t" style="left:584px;top:349.86px;font-size:14.5px;line-height:14.5px;color:#000;font-family:'Liberation Serif', serif;font-weight:400;letter-spacing:1.4px;-webkit-text-stroke:0.2px #000"><span style="display:inline-block;transform:translateY(3px)">7</span>6</div>
<div class="t" style="left:29px;top:367.86px;font-size:14.5px;line-height:14.5px;color:#000;font-family:'Liberation Serif', serif;font-weight:400;-webkit-text-stroke:0.2px #000;letter-spacing:0.233px">DEEPESH</div>
<div class="t" style="left:190px;top:367.86px;font-size:14.5px;line-height:14.5px;color:#000;font-family:'Liberation Serif', serif;font-weight:400;letter-spacing:1.4px;-webkit-text-stroke:0.2px #000"><span style="display:inline-block;transform:translateY(3px)">7</span><span style="display:inline-block;transform:scale(1.08,0.66);transform-origin:50% 12.14px">2</span></div>
<div class="t" style="left:280px;top:367.86px;font-size:14.5px;line-height:14.5px;color:#000;font-family:'Liberation Serif', serif;font-weight:400;letter-spacing:1.4px;-webkit-text-stroke:0.2px #000"><span style="display:inline-block;transform:scale(1.08,0.66);transform-origin:50% 12.14px">1</span><span style="display:inline-block;transform:scale(1.08,0.66);transform-origin:50% 12.14px">2</span></div>
<div class="t" style="left:379px;top:367.86px;font-size:14.5px;line-height:14.5px;color:#000;font-family:'Liberation Serif', serif;font-weight:400;letter-spacing:1.4px;-webkit-text-stroke:0.2px #000"><span style="display:inline-block;transform:translateY(3px)">5</span><span style="display:inline-block;transform:translateY(3px)">3</span></div>
<div class="t" style="left:481px;top:367.86px;font-size:14.5px;line-height:14.5px;color:#000;font-family:'Liberation Serif', serif;font-weight:400;letter-spacing:1.4px;-webkit-text-stroke:0.2px #000"><span style="display:inline-block;transform:translateY(3px)">7</span><span style="display:inline-block;transform:scale(1.08,0.66);transform-origin:50% 12.14px">0</span></div>
<div class="t" style="left:584px;top:367.86px;font-size:14.5px;line-height:14.5px;color:#000;font-family:'Liberation Serif', serif;font-weight:400;letter-spacing:1.4px;-webkit-text-stroke:0.2px #000"><span style="display:inline-block;transform:translateY(3px)">7</span><span style="display:inline-block;transform:scale(1.08,0.66);transform-origin:50% 12.14px">2</span></div>
<div class="t" style="left:29px;top:385.86px;font-size:14.5px;line-height:14.5px;color:#000;font-family:'Liberation Serif', serif;font-weight:400;-webkit-text-stroke:0.2px #000;letter-spacing:0.667px">PRATEEK</div>
<div class="t" style="left:190px;top:385.86px;font-size:14.5px;line-height:14.5px;color:#000;font-family:'Liberation Serif', serif;font-weight:400;letter-spacing:1.4px;-webkit-text-stroke:0.2px #000"><span style="display:inline-block;transform:translateY(3px)">5</span>6</div>
<div class="t" style="left:280px;top:385.86px;font-size:14.5px;line-height:14.5px;color:#000;font-family:'Liberation Serif', serif;font-weight:400;letter-spacing:1.4px;-webkit-text-stroke:0.2px #000"><span style="display:inline-block;transform:translateY(3px)">7</span>6</div>
<div class="t" style="left:379px;top:385.86px;font-size:14.5px;line-height:14.5px;color:#000;font-family:'Liberation Serif', serif;font-weight:400;letter-spacing:1.4px;-webkit-text-stroke:0.2px #000"><span style="display:inline-block;transform:translateY(3px)">9</span><span style="display:inline-block;transform:translateY(3px)">4</span></div>
<div class="t" style="left:481px;top:385.86px;font-size:14.5px;line-height:14.5px;color:#000;font-family:'Liberation Serif', serif;font-weight:400;letter-spacing:1.4px;-webkit-text-stroke:0.2px #000">66</div>
<div class="t" style="left:584px;top:385.86px;font-size:14.5px;line-height:14.5px;color:#000;font-family:'Liberation Serif', serif;font-weight:400;letter-spacing:1.4px;-webkit-text-stroke:0.2px #000">8<span style="display:inline-block;transform:scale(1.08,0.66);transform-origin:50% 12.14px">0</span></div>
<div class="t" style="left:29px;top:403.86px;font-size:14.5px;line-height:14.5px;color:#000;font-family:'Liberation Serif', serif;font-weight:400;-webkit-text-stroke:0.2px #000;letter-spacing:0.983px">PRATISH</div>
<div class="t" style="left:190px;top:403.86px;font-size:14.5px;line-height:14.5px;color:#000;font-family:'Liberation Serif', serif;font-weight:400;letter-spacing:1.4px;-webkit-text-stroke:0.2px #000"><span style="display:inline-block;transform:translateY(3px)">9</span>8</div>
<div class="t" style="left:280px;top:403.86px;font-size:14.5px;line-height:14.5px;color:#000;font-family:'Liberation Serif', serif;font-weight:400;letter-spacing:1.4px;-webkit-text-stroke:0.2px #000">66</div>
<div class="t" style="left:379px;top:403.86px;font-size:14.5px;line-height:14.5px;color:#000;font-family:'Liberation Serif', serif;font-weight:400;letter-spacing:1.4px;-webkit-text-stroke:0.2px #000"><span style="display:inline-block;transform:translateY(3px)">4</span><span style="display:inline-block;transform:translateY(3px)">3</span></div>
<div class="t" style="left:481px;top:403.86px;font-size:14.5px;line-height:14.5px;color:#000;font-family:'Liberation Serif', serif;font-weight:400;letter-spacing:1.4px;-webkit-text-stroke:0.2px #000">8<span style="display:inline-block;transform:translateY(3px)">7</span></div>
<div class="t" style="left:584px;top:403.86px;font-size:14.5px;line-height:14.5px;color:#000;font-family:'Liberation Serif', serif;font-weight:400;letter-spacing:1.4px;-webkit-text-stroke:0.2px #000"><span style="display:inline-block;transform:translateY(3px)">4</span><span style="display:inline-block;transform:translateY(3px)">4</span></div>
<div class="t" style="left:29px;top:421.86px;font-size:14.5px;line-height:14.5px;color:#000;font-family:'Liberation Serif', serif;font-weight:400;-webkit-text-stroke:0.2px #000;letter-spacing:0.717px">SHIVANI</div>
<div class="t" style="left:190px;top:421.86px;font-size:14.5px;line-height:14.5px;color:#000;font-family:'Liberation Serif', serif;font-weight:400;letter-spacing:1.4px;-webkit-text-stroke:0.2px #000"><span style="display:inline-block;transform:translateY(3px)">9</span><span style="display:inline-block;transform:scale(1.08,0.66);transform-origin:50% 12.14px">2</span></div>
<div class="t" style="left:280px;top:421.86px;font-size:14.5px;line-height:14.5px;color:#000;font-family:'Liberation Serif', serif;font-weight:400;letter-spacing:1.4px;-webkit-text-stroke:0.2px #000"><span style="display:inline-block;transform:translateY(3px)">5</span><span style="display:inline-block;transform:scale(1.08,0.66);transform-origin:50% 12.14px">2</span></div>
<div class="t" style="left:379px;top:421.86px;font-size:14.5px;line-height:14.5px;color:#000;font-family:'Liberation Serif', serif;font-weight:400;letter-spacing:1.4px;-webkit-text-stroke:0.2px #000">6<span style="display:inline-block;transform:scale(1.08,0.66);transform-origin:50% 12.14px">2</span></div>
<div class="t" style="left:481px;top:421.86px;font-size:14.5px;line-height:14.5px;color:#000;font-family:'Liberation Serif', serif;font-weight:400;letter-spacing:1.4px;-webkit-text-stroke:0.2px #000"><span style="display:inline-block;transform:translateY(3px)">9</span><span style="display:inline-block;transform:scale(1.08,0.66);transform-origin:50% 12.14px">1</span></div>
<div class="t" style="left:584px;top:421.86px;font-size:14.5px;line-height:14.5px;color:#000;font-family:'Liberation Serif', serif;font-weight:400;letter-spacing:1.4px;-webkit-text-stroke:0.2px #000"><span style="display:inline-block;transform:translateY(3px)">7</span><span style="display:inline-block;transform:translateY(3px)">7</span></div>
<div class="t" style="left:29px;top:439.86px;font-size:14.5px;line-height:14.5px;color:#000;font-family:'Liberation Serif', serif;font-weight:400;-webkit-text-stroke:0.2px #000;letter-spacing:0.94px">SHRUTI</div>
<div class="t" style="left:190px;top:439.86px;font-size:14.5px;line-height:14.5px;color:#000;font-family:'Liberation Serif', serif;font-weight:400;letter-spacing:1.4px;-webkit-text-stroke:0.2px #000"><span style="display:inline-block;transform:translateY(3px)">5</span><span style="display:inline-block;transform:translateY(3px)">9</span></div>
<div class="t" style="left:280px;top:439.86px;font-size:14.5px;line-height:14.5px;color:#000;font-family:'Liberation Serif', serif;font-weight:400;letter-spacing:1.4px;-webkit-text-stroke:0.2px #000"><span style="display:inline-block;transform:translateY(3px)">4</span><span style="display:inline-block;transform:translateY(3px)">9</span></div>
<div class="t" style="left:379px;top:439.86px;font-size:14.5px;line-height:14.5px;color:#000;font-family:'Liberation Serif', serif;font-weight:400;letter-spacing:1.4px;-webkit-text-stroke:0.2px #000"><span style="display:inline-block;transform:translateY(3px)">7</span><span style="display:inline-block;transform:scale(1.08,0.66);transform-origin:50% 12.14px">2</span></div>
<div class="t" style="left:481px;top:439.86px;font-size:14.5px;line-height:14.5px;color:#000;font-family:'Liberation Serif', serif;font-weight:400;letter-spacing:1.4px;-webkit-text-stroke:0.2px #000"><span style="display:inline-block;transform:translateY(3px)">4</span><span style="display:inline-block;transform:translateY(3px)">9</span></div>
<div class="t" style="left:584px;top:439.86px;font-size:14.5px;line-height:14.5px;color:#000;font-family:'Liberation Serif', serif;font-weight:400;letter-spacing:1.4px;-webkit-text-stroke:0.2px #000"><span style="display:inline-block;transform:translateY(3px)">3</span><span style="display:inline-block;transform:translateY(3px)">4</span></div>
<div class="t" style="left:29px;top:457.86px;font-size:14.5px;line-height:14.5px;color:#000;font-family:'Liberation Serif', serif;font-weight:400;-webkit-text-stroke:0.2px #000;letter-spacing:0.48px">SHREYA</div>
<div class="t" style="left:190px;top:457.86px;font-size:14.5px;line-height:14.5px;color:#000;font-family:'Liberation Serif', serif;font-weight:400;letter-spacing:1.4px;-webkit-text-stroke:0.2px #000"><span style="display:inline-block;transform:translateY(3px)">4</span><span style="display:inline-block;transform:translateY(3px)">7</span></div>
<div class="t" style="left:280px;top:457.86px;font-size:14.5px;line-height:14.5px;color:#000;font-family:'Liberation Serif', serif;font-weight:400;letter-spacing:1.4px;-webkit-text-stroke:0.2px #000">6<span style="display:inline-block;transform:scale(1.08,0.66);transform-origin:50% 12.14px">0</span></div>
<div class="t" style="left:379px;top:457.86px;font-size:14.5px;line-height:14.5px;color:#000;font-family:'Liberation Serif', serif;font-weight:400;letter-spacing:1.4px;-webkit-text-stroke:0.2px #000"><span style="display:inline-block;transform:translateY(3px)">3</span><span style="display:inline-block;transform:scale(1.08,0.66);transform-origin:50% 12.14px">1</span></div>
<div class="t" style="left:481px;top:457.86px;font-size:14.5px;line-height:14.5px;color:#000;font-family:'Liberation Serif', serif;font-weight:400;letter-spacing:1.4px;-webkit-text-stroke:0.2px #000">8<span style="display:inline-block;transform:translateY(3px)">7</span></div>
<div class="t" style="left:584px;top:457.86px;font-size:14.5px;line-height:14.5px;color:#000;font-family:'Liberation Serif', serif;font-weight:400;letter-spacing:1.4px;-webkit-text-stroke:0.2px #000"><span style="display:inline-block;transform:scale(1.08,0.66);transform-origin:50% 12.14px">1</span><span style="display:inline-block;transform:translateY(3px)">7</span></div>
<div class="t" style="left:697px;top:277.44px;font-size:15px;line-height:15px;color:#000;font-family:'Liberation Serif', serif;font-weight:700;">+F<span style="display:inline-block;transform:translateY(3px)">3</span>)</div>
</body></html>
